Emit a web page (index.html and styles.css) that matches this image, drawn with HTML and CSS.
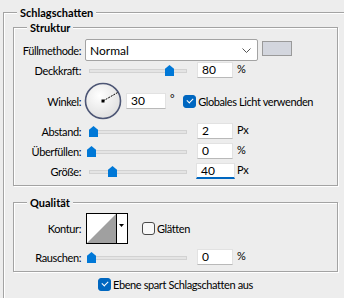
FILE: index.html
```html
<!DOCTYPE html>
<html lang="de">

<head>
  <meta charset="UTF-8">
  <title>Schlagschatten</title>
  <link rel="stylesheet" href="styles.css">
</head>

<body>
  <section class="group outer">
    <span class="group-title">Schlagschatten</span>

    <section class="group structure">
      <span class="group-title">Struktur</span>

      <div class="row row-mode">
        <span class="lbl">Füllmethode:</span>
        <div class="select">
          <span>Normal</span>
          <svg class="chev" width="9" height="5" viewBox="0 0 9 5"><path d="M0.5 0.5 L4.5 4.5 L8.5 0.5" fill="none" stroke="#555" stroke-width="1"/></svg>
        </div>
        <span class="swatch"></span>
      </div>

      <div class="row row-first">
        <span class="lbl">Deckkraft:</span>
        <div class="slider"><span class="track"></span><span class="thumb" style="left: 78px"></span></div>
        <span class="num">80</span>
        <span class="unit">%</span>
      </div>

      <div class="row row-angle">
        <span class="lbl">Winkel:</span>
        <svg class="dial" width="38" height="38" viewBox="0 0 38 38">
          <defs>
            <radialGradient id="dialFill" cx="40%" cy="35%" r="70%">
              <stop offset="0" stop-color="#ffffff"/>
              <stop offset="1" stop-color="#dedede"/>
            </radialGradient>
          </defs>
          <circle cx="19" cy="19" r="17.5" fill="url(#dialFill)" stroke="#4d5675" stroke-width="1.6"/>
          <line x1="19" y1="19" x2="33.5" y2="10.6" stroke="#000" stroke-width="1" stroke-dasharray="2 1"/>
          <rect x="17.5" y="17.5" width="3" height="3" fill="#000"/>
        </svg>
        <span class="num num-wide">30</span>
        <span class="deg">°</span>
        <label class="check"><span class="box on"></span>Globales Licht verwenden</label>
      </div>

      <div class="row">
        <span class="lbl">Abstand:</span>
        <div class="slider"><span class="track"></span><span class="thumb" style="left: 2px"></span></div>
        <span class="num">2</span>
        <span class="unit">Px</span>
      </div>

      <div class="row">
        <span class="lbl">Überfüllen:</span>
        <div class="slider"><span class="track"></span><span class="thumb" style="left: 0px"></span></div>
        <span class="num">0</span>
        <span class="unit">%</span>
      </div>

      <div class="row">
        <span class="lbl">Größe:</span>
        <div class="slider"><span class="track"></span><span class="thumb" style="left: 21px"></span></div>
        <span class="num focus">40</span>
        <span class="unit">Px</span>
      </div>
    </section>

    <section class="group quality">
      <span class="group-title">Qualität</span>

      <div class="row row-contour">
        <span class="lbl">Kontur:</span>
        <svg class="contour" width="42" height="31" viewBox="0 0 42 31">
          <rect x="0.5" y="0.5" width="41" height="30" fill="#fff" stroke="#000"/>
          <polygon points="1,30 30,1 30,30" fill="#a0a0a0"/>
          <line x1="30.5" y1="1" x2="30.5" y2="30" stroke="#000"/>
          <polygon points="33,11 38,11 35.5,14" fill="#000"/>
        </svg>
        <label class="check check-smooth"><span class="box"></span>Glätten</label>
      </div>

      <div class="row row-noise">
        <span class="lbl">Rauschen:</span>
        <div class="slider"><span class="track"></span><span class="thumb" style="left: 0px"></span></div>
        <span class="num">0</span>
        <span class="unit">%</span>
      </div>
    </section>

    <div class="row row-bottom">
      <label class="check"><span class="box on"></span>Ebene spart Schlagschatten aus</label>
    </div>
  </section>
</body>

</html>
```

FILE: styles.css
```css
html,
body {
  margin: 0;
  padding: 0;
  overflow: hidden;
}

body {
  width: 344px;
  height: 298px;
  background-color: #ededed;
  color: #000000;
  font-family: Lato, "Liberation Sans", sans-serif;
  font-size: 11px;
  line-height: 15px;
  letter-spacing: -0.4px;
}

/* Group boxes */
.group {
  position: relative;
  box-sizing: border-box;
  border: 1px solid #a3a3a3;
  box-shadow: 1px 1px 0 #ffffff, inset 1px 1px 0 #ffffff;
}

.group-title {
  position: absolute;
  top: -8px;
  left: 13px;
  padding: 0 3px;
  background: #ededed;
  font-weight: bold;
  letter-spacing: 0;
}

.outer {
  width: 341px;
  height: 286px;
  margin: 12px 0 0 3px;
  border-right: none;
  border-bottom: none;
  box-shadow: inset 1px 1px 0 #ffffff;
  padding-top: 1px;
}

.structure,
.quality {
  width: 325px;
  margin-left: 9px;
}

.structure {
  height: 159px;
  margin-top: 13px;
  padding-top: 11px;
}

.quality {
  height: 70px;
  margin-top: 16px;
  padding-top: 10px;
}

/* Rows */
.row {
  display: flex;
  align-items: center;
  height: 16px;
  margin-top: 4px;
}

.lbl {
  width: 67px;
  text-align: right;
  flex: none;
}

.row-mode {
  height: 22px;
  margin-top: 0;
}

.row-first {
  margin-top: 1px;
}

.row-angle {
  height: 38px;
  margin-top: 4px;
}

.row-angle + .row {
  margin-top: 3px;
}

.row-contour {
  height: 31px;
  margin-top: 0;
}

.row-noise {
  margin-top: 5px;
}

.row-bottom {
  margin-top: 4px;
  padding-left: 85px;
}

/* Füllmethode select */
.select {
  margin-left: 4px;
  width: 173px;
  height: 22px;
  box-sizing: border-box;
  background: #ffffff;
  border: 1px solid #a3a3a3;
  border-radius: 2px;
  display: flex;
  align-items: center;
  justify-content: space-between;
  padding: 0 6px 0 4px;
  font-size: 12px;
  letter-spacing: 0;
}

.swatch {
  margin-left: 4px;
  margin-bottom: 3px;
  width: 30px;
  height: 15px;
  box-sizing: border-box;
  background: #d3d6de;
  border: 1px solid #9a9a9a;
}

/* Sliders */
.slider {
  position: relative;
  margin-left: 8px;
  width: 98px;
  height: 16px;
  flex: none;
}

.track {
  position: absolute;
  left: 0;
  right: 0;
  top: 7px;
  height: 2px;
  background: #e4e4e4;
  border: 1px solid #d2d2d2;
}

.thumb {
  position: absolute;
  top: 3px;
  width: 9px;
  height: 11px;
  margin-left: -2px;
  background: #0078d7;
  clip-path: polygon(50% 0, 100% 35%, 100% 100%, 0 100%, 0 35%);
}

/* Number fields */
.num {
  margin-left: 10px;
  width: 36px;
  height: 16px;
  box-sizing: border-box;
  padding-left: 4px;
  background: #ffffff;
  border: 1px solid #e2e2e2;
  border-bottom-color: #b9b9b9;
  font-size: 12px;
  line-height: 14px;
  letter-spacing: 0;
  flex: none;
}

.num.focus {
  border-bottom: 2px solid #0067c0;
  width: 39px;
  margin-left: 9px;
  margin-right: -2px;
}

.num-wide {
  margin-left: 4px;
  width: 40px;
}

.unit {
  margin-left: 4px;
  margin-bottom: 3px;
}

.deg {
  margin-left: 4px;
  align-self: flex-start;
  margin-top: 9px;
}

/* Angle dial */
.dial {
  margin-left: 3px;
  flex: none;
}

/* Kontur picker */
.contour {
  margin-left: 5px;
  flex: none;
}

/* Checkboxes */
.check {
  display: flex;
  align-items: center;
  margin-left: 9px;
  white-space: nowrap;
}

.check-smooth {
  margin-left: 14px;
}

.box {
  width: 13px;
  height: 13px;
  box-sizing: border-box;
  margin-right: 2px;
  border: 1px solid #4a4a4a;
  border-radius: 3px;
  background: #f8f8f8;
  position: relative;
}

.box.on {
  background: #0067c0;
  border-color: #0067c0;
}

.box.on::after {
  content: "";
  position: absolute;
  left: 3px;
  top: 2px;
  width: 5px;
  height: 3px;
  border-left: 1px solid #ffffff;
  border-bottom: 1px solid #ffffff;
  transform: rotate(-45deg);
}
```
